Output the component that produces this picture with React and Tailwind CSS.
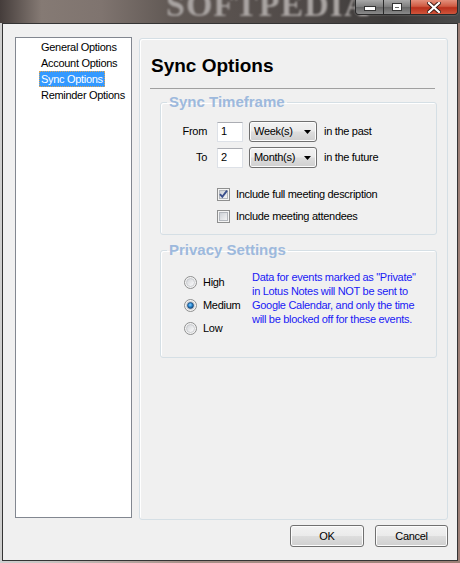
import React from 'react';

const btnFace =
  'border border-[#707070] rounded-[3px] bg-[linear-gradient(180deg,#f2f2f2_0%,#ebebeb_48%,#dddddd_52%,#cfcfcf_100%)] shadow-[inset_0_0_0_1px_#fcfcfc]';

const Checkbox = ({ checked }) => (
  <svg width="13" height="13" viewBox="0 0 13 13" className="shrink-0">
    <defs>
      <linearGradient id="cbg" x1="0" y1="0" x2="1" y2="1">
        <stop offset="0" stopColor="#cbcfd5" />
        <stop offset="1" stopColor="#f6f6f6" />
      </linearGradient>
    </defs>
    <rect x="0.5" y="0.5" width="12" height="12" fill="#f4f4f4" stroke="#8e8f8f" />
    <rect x="2.5" y="2.5" width="8" height="8" fill="url(#cbg)" stroke="#b3b7bd" />
    {checked && (
      <path d="M3 6.2 L5.3 8.8 L10 2.6" fill="none" stroke="#3a4f8c" strokeWidth="1.9" />
    )}
  </svg>
);

const Radio = ({ checked }) => (
  <svg width="13" height="13" viewBox="0 0 13 13" className="shrink-0">
    <defs>
      <linearGradient id="rbg" x1="0" y1="0" x2="1" y2="1">
        <stop offset="0" stopColor="#d0d2d6" />
        <stop offset="1" stopColor="#ffffff" />
      </linearGradient>
      <radialGradient id="rdot" cx="0.45" cy="0.4" r="0.6">
        <stop offset="0" stopColor="#8fd3ff" />
        <stop offset="0.5" stopColor="#2b8ad4" />
        <stop offset="1" stopColor="#12477e" />
      </radialGradient>
    </defs>
    <circle cx="6.5" cy="6.5" r="6" fill="#f3f3f3" stroke="#8e8f8f" />
    <circle cx="6.5" cy="6.5" r="4" fill="url(#rbg)" stroke="#c2c4c8" strokeWidth="0.8" />
    {checked && <circle cx="6.5" cy="6.5" r="3" fill="url(#rdot)" stroke="#1e4a78" strokeWidth="0.7" />}
  </svg>
);

const Combo = ({ label }) => (
  <div className={`w-[68px] h-[21px] flex items-center justify-between pl-[4px] pr-[5px] ${btnFace}`}>
    <span>{label}</span>
    <svg width="7" height="4" viewBox="0 0 7 4">
      <path d="M0 0 H7 L3.5 4 Z" fill="#000" />
    </svg>
  </div>
);

const TextBox = ({ value }) => (
  <div className="w-[26px] h-[20px] bg-white border border-[#dde1e7] border-t-[#abadb3] pl-[3px] flex items-center">
    {value}
  </div>
);

const WinButtons = () => (
  <div className="absolute top-0 left-[355px] flex h-[15px] rounded-b-[4px] border border-t-0 border-[#2a2a2a] overflow-hidden shadow-[0_0_2px_rgba(255,255,255,0.4)]">
    <div className="w-[28px] h-full border-r border-[#2a2a2a] bg-[linear-gradient(180deg,#a9a9a9_0%,#7c7c7c_50%,#666_51%,#8a8a8a_100%)] flex items-end justify-center pb-[3px]">
      <div className="w-[10px] h-[3px] bg-white border border-[#333] box-content" />
    </div>
    <div className="w-[27px] h-full border-r border-[#2a2a2a] bg-[linear-gradient(180deg,#a9a9a9_0%,#7c7c7c_50%,#666_51%,#8a8a8a_100%)] flex items-center justify-center">
      <div className="w-[8px] h-[6px] border-2 border-white border-t-[3px] outline outline-1 outline-[#333]" />
    </div>
    <div className="w-[46px] h-full bg-[linear-gradient(180deg,#e3907c_0%,#cf5a42_45%,#b9301c_55%,#d0553b_100%)] flex items-center justify-center">
      <svg width="14" height="11" viewBox="0 0 14 11">
        <path d="M2 1 L12 10 M12 1 L2 10" stroke="#3a1a14" strokeWidth="4" strokeLinecap="square" />
        <path d="M2 1 L12 10 M12 1 L2 10" stroke="#fff" strokeWidth="2.2" strokeLinecap="square" />
      </svg>
    </div>
  </div>
);

export default function App() {
  const treeItems = ['General Options', 'Account Options', 'Sync Options', 'Reminder Options'];

  return (
    <div className="w-[460px] h-[563px] overflow-hidden bg-[linear-gradient(90deg,#cfcfcf_0%,#c8c4c2_10%,#a89088_40%,#9c7f76_100%)] font-['Liberation_Sans',Arial,sans-serif] text-[11px] tracking-[-0.3px] text-black">
      {/* Title bar (cropped glass) */}
      <div className="relative h-[23px] bg-[linear-gradient(90deg,#453d3b_0%,#857a74_9%,#7f746f_22%,#5f5753_38%,#504a48_65%,#3c3a39_85%,#4a4a4a_100%)]">
        <div className="absolute left-[166px] top-[-12px] text-[34px] leading-[34px] font-bold tracking-[1px] text-[#a9a4a2] blur-[1.2px] font-['Liberation_Serif',serif]">
          SOFTPEDIA
        </div>
        <WinButtons />
      </div>

      {/* Client area */}
      <div className="ml-[2px] w-[456px] h-[538px] border border-[#343434] bg-[#f0f0f0] flex flex-col">
        <div className="flex items-start pl-[12px] pt-[13px]">
          {/* Tree */}
          <div className="w-[117px] h-[481px] bg-white border border-[#828790] pt-[1px] pl-[23px] whitespace-nowrap">
            {treeItems.map((item) => (
              <div key={item} className="h-[16px] flex items-center">
                {item === 'Sync Options' ? (
                  <span className="h-[16px] px-[1px] flex items-center bg-[#3399ff] text-white border border-dotted border-[#d9a55a]">
                    {item}
                  </span>
                ) : (
                  <span className="px-[2px]">{item}</span>
                )}
              </div>
            ))}
          </div>

          {/* Options panel */}
          <div className="ml-[7px] mt-[1px] w-[309px] h-[482px] border border-[#d5dfe5] rounded-[3px] shadow-[inset_1px_1px_0_#ffffff]">
            <div className="pl-[11px] pt-[16px] text-[19px] leading-[22px] font-bold tracking-normal">Sync Options</div>
            <div className="ml-[10px] mt-[11px] w-[285px] h-px bg-[#a0a0a0]" />

            <fieldset className="ml-[20px] mt-[5px] w-[277px] border border-[#d5dfe5] rounded-[3px] pb-[11px] shadow-[inset_1px_1px_0_#fff]">
              <legend className="ml-[6px] px-[2px] text-[15px] leading-[16px] font-bold tracking-normal text-[#9db9dd]">
                Sync Timeframe
              </legend>
              <div className="mt-[11px] flex items-center whitespace-nowrap">
                <span className="w-[46px] text-right">From</span>
                <div className="ml-[10px]"><TextBox value="1" /></div>
                <div className="ml-[6px]"><Combo label="Week(s)" /></div>
                <span className="ml-[7px]">in the past</span>
              </div>
              <div className="mt-[5px] flex items-center whitespace-nowrap">
                <span className="w-[46px] text-right">To</span>
                <div className="ml-[10px]"><TextBox value="2" /></div>
                <div className="ml-[6px]"><Combo label="Month(s)" /></div>
                <span className="ml-[7px]">in the future</span>
              </div>
              <div className="mt-[19px] pl-[56px] flex flex-col gap-[8px] whitespace-nowrap">
                <div className="h-[14px] flex items-center gap-[6px]">
                  <Checkbox checked />
                  <span>Include full meeting description</span>
                </div>
                <div className="h-[14px] flex items-center gap-[6px]">
                  <Checkbox />
                  <span>Include meeting attendees</span>
                </div>
              </div>
            </fieldset>

            <fieldset className="ml-[20px] mt-[7px] w-[277px] border border-[#d5dfe5] rounded-[3px] pb-[21px] shadow-[inset_1px_1px_0_#fff]">
              <legend className="ml-[6px] px-[2px] text-[15px] leading-[16px] font-bold tracking-normal text-[#9db9dd]">
                Privacy Settings
              </legend>
              <div className="flex items-start pl-[23px]">
                <div className="w-[68px] mt-[17px] flex flex-col gap-[8px]">
                  {[['High', false], ['Medium', true], ['Low', false]].map(([label, on]) => (
                    <div key={label} className="h-[15px] flex items-center gap-[6px]">
                      <Radio checked={on} />
                      <span>{label}</span>
                    </div>
                  ))}
                </div>
                <div className="mt-[12px] leading-[14px] text-[#1a1af5] whitespace-nowrap">
                  Data for events marked as "Private"
                  <br />
                  in Lotus Notes will NOT be sent to
                  <br />
                  Google Calendar, and only the time
                  <br />
                  will be blocked off for these events.
                </div>
              </div>
            </fieldset>
          </div>
        </div>

        {/* Dialog buttons */}
        <div className="mt-[5px] flex justify-end gap-[11px] pr-[9px]">
          <button className={`w-[74px] h-[22px] ${btnFace}`}>OK</button>
          <button className={`w-[73px] h-[22px] ${btnFace}`}>Cancel</button>
        </div>
      </div>
    </div>
  );
}
